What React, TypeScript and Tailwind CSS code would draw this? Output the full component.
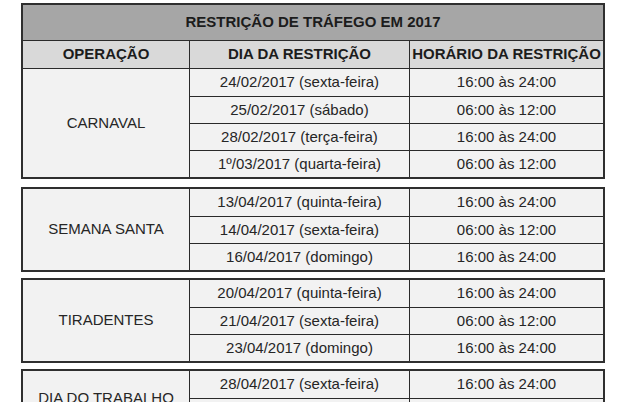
import React from "react";

type Block = { name: string; rows: [string, string][] };

const blocks: Block[] = [
  {
    name: "CARNAVAL",
    rows: [
      ["24/02/2017 (sexta-feira)", "16:00 às 24:00"],
      ["25/02/2017 (sábado)", "06:00 às 12:00"],
      ["28/02/2017 (terça-feira)", "16:00 às 24:00"],
      ["1º/03/2017 (quarta-feira)", "06:00 às 12:00"],
    ],
  },
  {
    name: "SEMANA SANTA",
    rows: [
      ["13/04/2017 (quinta-feira)", "16:00 às 24:00"],
      ["14/04/2017 (sexta-feira)", "06:00 às 12:00"],
      ["16/04/2017 (domingo)", "16:00 às 24:00"],
    ],
  },
  {
    name: "TIRADENTES",
    rows: [
      ["20/04/2017 (quinta-feira)", "16:00 às 24:00"],
      ["21/04/2017 (sexta-feira)", "06:00 às 12:00"],
      ["23/04/2017 (domingo)", "16:00 às 24:00"],
    ],
  },
  {
    name: "DIA DO TRABALHO",
    rows: [
      ["28/04/2017 (sexta-feira)", "16:00 às 24:00"],
      ["30/04/2017 (domingo)", "16:00 às 24:00"],
    ],
  },
];

function Body({ block }: { block: Block }) {
  return (
    <div className="grid grid-cols-[167px_220px_1fr] bg-[#f2f2f2]">
      <div
        className="flex items-center justify-center border-r border-[#2a2a2a] text-[15px] text-[#262626]"
        style={{ gridRow: `1 / span ${block.rows.length}` }}
      >
        {block.name}
      </div>
      {block.rows.map((r, i) => (
        <React.Fragment key={i}>
          <div
            className={`flex h-[27px] items-center justify-center border-r border-[#2a2a2a] text-[15px] text-[#262626] ${
              i > 0 ? "border-t" : ""
            }`}
            style={{ gridColumn: 2 }}
          >
            {r[0]}
          </div>
          <div
            className={`flex h-[27px] items-center justify-center border-[#2a2a2a] text-[15px] text-[#262626] ${
              i > 0 ? "border-t" : ""
            }`}
            style={{ gridColumn: 3 }}
          >
            {r[1]}
          </div>
        </React.Fragment>
      ))}
    </div>
  );
}

export default function App() {
  return (
    <div
      className="h-[402px] w-[624px] overflow-hidden bg-white pt-[3px] pl-[21px]"
      style={{ fontFamily: '"Liberation Sans", Arial, sans-serif' }}
    >
      <div className="w-[584px] border-2 border-[#2f2f2f]">
        <div className="flex h-[36px] items-center justify-center border-b border-[#2a2a2a] bg-[#a6a6a6] text-[15px] font-bold text-[#1c1c1c]">
          RESTRIÇÃO DE TRÁFEGO EM 2017
        </div>
        <div className="grid h-[28px] grid-cols-[167px_220px_1fr] border-b border-[#2a2a2a] bg-[#d9d9d9] text-[15px] font-bold text-[#1c1c1c]">
          <div className="flex items-center justify-center border-r border-[#2a2a2a]">OPERAÇÃO</div>
          <div className="flex items-center justify-center border-r border-[#2a2a2a]">DIA DA RESTRIÇÃO</div>
          <div className="flex items-center justify-center">HORÁRIO DA RESTRIÇÃO</div>
        </div>
        <Body block={blocks[0]} />
      </div>
      <div className="mt-[8px] w-[584px] border-2 border-[#2f2f2f]">
        <Body block={blocks[1]} />
      </div>
      <div className="mt-[6px] w-[584px] border-2 border-[#2f2f2f]">
        <Body block={blocks[2]} />
      </div>
      <div className="mt-[6px] w-[584px] border-2 border-[#2f2f2f]">
        <Body block={blocks[3]} />
      </div>
    </div>
  );
}
